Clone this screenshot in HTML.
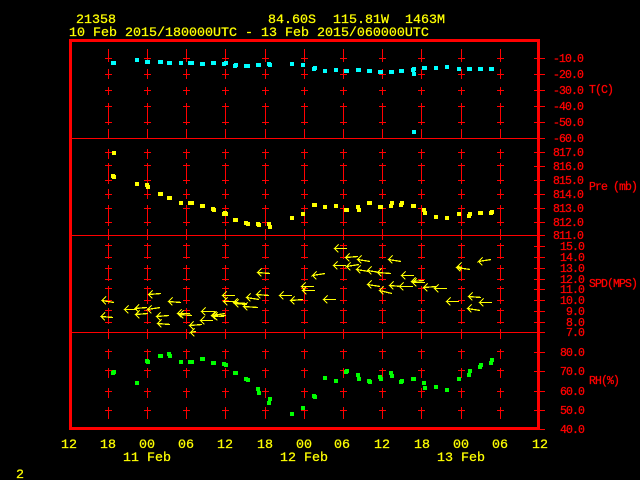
<!DOCTYPE html>
<html><head><meta charset="utf-8"><style>
html,body{margin:0;padding:0;background:#000;width:640px;height:480px;overflow:hidden}
svg{display:block}
text{font-family:"Liberation Mono",monospace}
.y{font-size:13.33px;fill:#ff0;stroke:#ff0;stroke-width:.25px}
.r{font-size:11.5px;letter-spacing:-.9px;fill:#f00;stroke:#f00;stroke-width:.3px}
</style></head><body>
<svg width="640" height="480" viewBox="0 0 640 480" xmlns="http://www.w3.org/2000/svg">
<defs>
<path id="c" shape-rendering="crispEdges" fill="none" stroke="#f00" stroke-width="1" d="M.5 49V62M.5 69V79M.5 87V95M.5 103V125M.5 129V138M.5 149V159M.5 163V184M.5 189V199M.5 205V226M.5 229V240M.5 243V259M.5 265V281M.5 286V304M.5 308V324M.5 329V339M.5 349V359M.5 368V378M.5 388V398M.5 407V419M-3 58.500H4M-3 74.500H4M-3 90.500H4M-3 106.500H4M-3 122.500H4M-3 152.500H4M-3 165.500H4M-3 180.500H4M-3 194.500H4M-3 208.500H4M-3 222.500H4M-3 245.500H4M-3 257.500H4M-3 268.500H4M-3 279.500H4M-3 288.500H4M-3 300.500H4M-3 310.500H4M-3 322.500H4M-3 351.500H4M-3 370.500H4M-3 391.500H4M-3 410.500H4"/>
</defs>
<rect width="640" height="480" fill="#000"/>
<use href="#c" x="108"/><use href="#c" x="147"/><use href="#c" x="186"/><use href="#c" x="225"/><use href="#c" x="265"/><use href="#c" x="304"/><use href="#c" x="343"/><use href="#c" x="382"/><use href="#c" x="421"/><use href="#c" x="461"/><use href="#c" x="500"/>
<path shape-rendering="crispEdges" fill="none" stroke="#f00" d="M72 138.500H545M72 235.500H545M72 332.500H545M534 58.500H545M534 74.500H545M534 90.500H545M534 106.500H545M534 122.500H545M534 152.500H545M534 166.500H545M534 180.500H545M534 194.500H545M534 208.500H545M534 222.500H545M534 246.500H545M534 257.500H545M534 268.500H545M534 279.500H545M534 289.500H545M534 300.500H545M534 311.500H545M534 322.500H545M534 352.500H545M534 371.500H545M534 391.500H545M534 410.500H545M534 429.500H545"/>
<rect x="70.500" y="40.500" width="468" height="388" fill="none" stroke="#f00" stroke-width="3" shape-rendering="crispEdges"/>

<path fill="#0ff" shape-rendering="crispEdges" d="M111 61h5v4h-5zM135 58h4v4h-4zM145 60h5v4h-5zM158 60h5v4h-5zM167 61h5v4h-5zM179 61h4v4h-4zM188 61h6v4h-6zM200 62h5v4h-5zM211 61h5v4h-5zM222 62h4v4h-4zM224 61h4v4h-4zM233 64h4v4h-4zM234 63h4v4h-4zM244 64h6v4h-6zM256 63h5v4h-5zM267 62h4v4h-4zM268 63h4v4h-4zM290 62h4v4h-4zM301 63h4v4h-4zM312 67h4v4h-4zM313 66h4v4h-4zM323 69h4v4h-4zM334 68h4v4h-4zM344 69h5v4h-5zM356 68h5v4h-5zM367 69h5v4h-5zM378 70h5v4h-5zM389 70h5v4h-5zM399 69h5v4h-5zM411 68h4v4h-4zM412 67h4v4h-4zM412 72h4v4h-4zM412 130h4v4h-4zM422 66h5v4h-5zM434 66h4v4h-4zM445 65h4v4h-4zM457 67h4v4h-4zM467 67h5v4h-5zM478 67h5v4h-5zM489 67h5v4h-5z"/>

<path fill="#ff0" shape-rendering="crispEdges" d="M112 151h4v4h-4zM111 174h4v4h-4zM112 175h4v4h-4zM135 182h4v4h-4zM145 183h4v4h-4zM146 185h4v4h-4zM158 192h5v4h-5zM167 196h5v4h-5zM179 201h4v4h-4zM188 201h6v4h-6zM200 204h5v4h-5zM211 207h4v4h-4zM212 208h4v4h-4zM222 212h4v4h-4zM223 211h4v4h-4zM224 212h4v4h-4zM233 218h5v4h-5zM244 221h4v4h-4zM246 222h4v4h-4zM256 222h4v4h-4zM257 223h4v4h-4zM267 222h4v4h-4zM268 225h4v4h-4zM290 216h4v4h-4zM301 212h4v4h-4zM312 203h5v4h-5zM323 205h4v4h-4zM334 204h4v4h-4zM344 208h5v4h-5zM356 205h4v4h-4zM357 208h4v4h-4zM367 201h5v4h-5zM378 205h5v4h-5zM389 204h4v4h-4zM390 201h4v4h-4zM399 203h4v4h-4zM400 201h4v4h-4zM411 204h5v4h-5zM422 208h4v4h-4zM423 211h4v4h-4zM434 215h4v4h-4zM445 216h4v4h-4zM457 212h4v4h-4zM467 214h4v4h-4zM468 212h4v4h-4zM478 211h5v4h-5zM489 211h4v4h-4zM490 210h4v4h-4z"/>

<path fill="#0f0" shape-rendering="crispEdges" d="M111 371h4v4h-4zM112 370h4v4h-4zM135 381h4v4h-4zM145 359h4v4h-4zM146 360h4v4h-4zM158 354h5v4h-5zM167 352h4v4h-4zM168 354h4v4h-4zM179 360h4v4h-4zM188 360h6v4h-6zM200 357h5v4h-5zM211 361h5v4h-5zM222 362h4v4h-4zM224 363h4v4h-4zM233 371h5v4h-5zM244 377h4v4h-4zM246 378h4v4h-4zM256 387h4v4h-4zM257 391h4v4h-4zM267 401h4v4h-4zM268 397h4v4h-4zM290 412h4v4h-4zM301 406h4v4h-4zM312 394h4v4h-4zM313 395h4v4h-4zM323 376h4v4h-4zM334 379h4v4h-4zM344 370h4v4h-4zM345 369h4v4h-4zM356 373h4v4h-4zM357 377h4v4h-4zM367 379h4v4h-4zM368 380h4v4h-4zM378 375h4v4h-4zM379 377h4v4h-4zM389 371h4v4h-4zM390 374h4v4h-4zM399 380h4v4h-4zM400 379h4v4h-4zM411 377h5v4h-5zM422 381h4v4h-4zM423 386h4v4h-4zM434 385h4v4h-4zM445 388h4v4h-4zM457 377h4v4h-4zM467 373h4v4h-4zM468 369h4v4h-4zM478 365h4v4h-4zM479 363h4v4h-4zM489 361h4v4h-4zM490 358h4v4h-4z"/>

<path fill="none" stroke="#ff0" stroke-width="1.3" shape-rendering="crispEdges" d="
M114 302.500L102 300.500l4-4m-4 4l4 4
M113 317.500L101 316.500l4-4m-4 4l4 4
M137 309.500L124.500 309.500l4-4m-4 4l4 4
M147 307.500L135 308.500l4-4m-4 4l4 4
M148 313.500L135.500 314.500l4-4m-4 4l4 4
M160 307.500L147.500 309.500l4-4m-4 4l4 4
M161 293.500L148.500 294.500l4-4m-4 4l4 4
M169 315.500L156.500 316.500l4-4m-4 4l4 4
M170 324.500L157.500 323.500l4-4m-4 4l4 4
M181 302.500L168.500 301.500l4-4m-4 4l4 4
M190 313.500L177.500 313.500l4-4m-4 4l4 4
M192 315.500L179.500 314.500l4-4m-4 4l4 4
M202 324.500L189.500 325.500l4-4m-4 4l4 4
M196 331.500L190.500 332.500l4-4m-4 4l4 4
M213 320.500L200.500 320.500l4-4m-4 4l4 4
M215 311.500L201.500 311.500l4-4m-4 4l4 4
M224 316.500L211.500 315.500l4-4m-4 4l4 4
M225 313.500L212.500 315.500l4-4m-4 4l4 4
M226 315.500L213.500 316.500l4-4m-4 4l4 4
M235 295.500L222.500 295.500l4-4m-4 4l4 4
M236 301.500L223.500 301.500l4-4m-4 4l4 4
M246 303.500L233.500 302.500l4-4m-4 4l4 4
M247 304.500L234.500 303.500l4-4m-4 4l4 4
M258 307.500L243.500 306.500l4-4m-4 4l4 4
M259 299.500L246.500 297.500l4-4m-4 4l4 4
M269 295.500L256.500 294.500l4-4m-4 4l4 4
M270 273.500L257.500 272.500l4-4m-4 4l4 4
M292 295.500L279.500 295.500l4-4m-4 4l4 4
M303 299.500L290.500 300.500l4-4m-4 4l4 4
M314 286.500L301.500 286.500l4-4m-4 4l4 4
M315 290.500L302.500 290.500l4-4m-4 4l4 4
M325 273.500L312.500 275.500l4-4m-4 4l4 4
M336 299.500L323.500 299.500l4-4m-4 4l4 4
M347 248.500L334.500 248.500l4-4m-4 4l4 4
M358 256.500L345.500 257.500l4-4m-4 4l4 4
M346 265.500L333.500 265.500l4-4m-4 4l4 4
M359 264.500L346.500 266.500l4-4m-4 4l4 4
M370 261.500L357.500 259.500l4-4m-4 4l4 4
M369 271.500L356.500 269.500l4-4m-4 4l4 4
M380 272.500L367.500 270.500l4-4m-4 4l4 4
M391 273.500L377.500 272.500l4-4m-4 4l4 4
M401 261.500L388.500 259.500l4-4m-4 4l4 4
M380 286.500L367.500 284.500l4-4m-4 4l4 4
M392 293.500L379.500 290.500l4-4m-4 4l4 4
M402 286.500L389.500 285.500l4-4m-4 4l4 4
M413 286.500L399.500 286.500l4-4m-4 4l4 4
M414 275.500L401.500 275.500l4-4m-4 4l4 4
M424 280.500L411.500 281.500l4-4m-4 4l4 4
M425 282.500L412.500 282.500l4-4m-4 4l4 4
M437 286.500L423.500 287.500l4-4m-4 4l4 4
M447 288.500L434.500 288.500l4-4m-4 4l4 4
M459 301.500L446.500 301.500l4-4m-4 4l4 4
M470 269.500L456.500 267.500l4-4m-4 4l4 4
M462 267.500L457.500 266.500l4-4m-4 4l4 4
M480 310.500L467.500 308.500l4-4m-4 4l4 4
M481 297.500L468.500 296.500l4-4m-4 4l4 4
M492 302.500L479.500 302.500l4-4m-4 4l4 4
M491 259.500L478.500 261.500l4-4m-4 4l4 4"/>

<text class="y" x="76" y="23">21358</text>
<text class="y" x="268" y="23">84.60S</text>
<text class="y" x="333" y="23">115.81W</text>
<text class="y" x="405" y="23">1463M</text>
<text class="y" x="69" y="36">10 Feb 2015/180000UTC - 13 Feb 2015/060000UTC</text>

<text class="r" x="553" y="62">-10.0</text>
<text class="r" x="553" y="78">-20.0</text>
<text class="r" x="553" y="94">-30.0</text>
<text class="r" x="553" y="110">-40.0</text>
<text class="r" x="553" y="126">-50.0</text>
<text class="r" x="553" y="142">-60.0</text>
<text class="r" x="553" y="156">817.0</text>
<text class="r" x="553" y="170">816.0</text>
<text class="r" x="553" y="184">815.0</text>
<text class="r" x="553" y="198">814.0</text>
<text class="r" x="553" y="212">813.0</text>
<text class="r" x="553" y="226">812.0</text>
<text class="r" x="553" y="239">811.0</text>
<text class="r" x="560" y="250">15.0</text>
<text class="r" x="560" y="261">14.0</text>
<text class="r" x="560" y="272">13.0</text>
<text class="r" x="560" y="283">12.0</text>
<text class="r" x="560" y="293">11.0</text>
<text class="r" x="560" y="304">10.0</text>
<text class="r" x="566" y="315">9.0</text>
<text class="r" x="566" y="326">8.0</text>
<text class="r" x="566" y="336">7.0</text>
<text class="r" x="560" y="356">80.0</text>
<text class="r" x="560" y="375">70.0</text>
<text class="r" x="560" y="395">60.0</text>
<text class="r" x="560" y="414">50.0</text>
<text class="r" x="560" y="433">40.0</text>
<text class="r" x="589" y="93">T(C)</text>
<text class="r" x="589" y="190">Pre (mb)</text>
<text class="r" x="589" y="287">SPD(MPS)</text>
<text class="r" x="589" y="384">RH(%)</text>

<text class="y" x="61" y="448">12</text>
<text class="y" x="100" y="448">18</text>
<text class="y" x="139" y="448">00</text>
<text class="y" x="178" y="448">06</text>
<text class="y" x="217" y="448">12</text>
<text class="y" x="257" y="448">18</text>
<text class="y" x="296" y="448">00</text>
<text class="y" x="334" y="448">06</text>
<text class="y" x="374" y="448">12</text>
<text class="y" x="414" y="448">18</text>
<text class="y" x="453" y="448">00</text>
<text class="y" x="492" y="448">06</text>
<text class="y" x="532" y="448">12</text>
<text class="y" x="123" y="461">11 Feb</text>
<text class="y" x="280" y="461">12 Feb</text>
<text class="y" x="437" y="461">13 Feb</text>
<text class="y" x="16" y="478">2</text>
</svg>
</body></html>
